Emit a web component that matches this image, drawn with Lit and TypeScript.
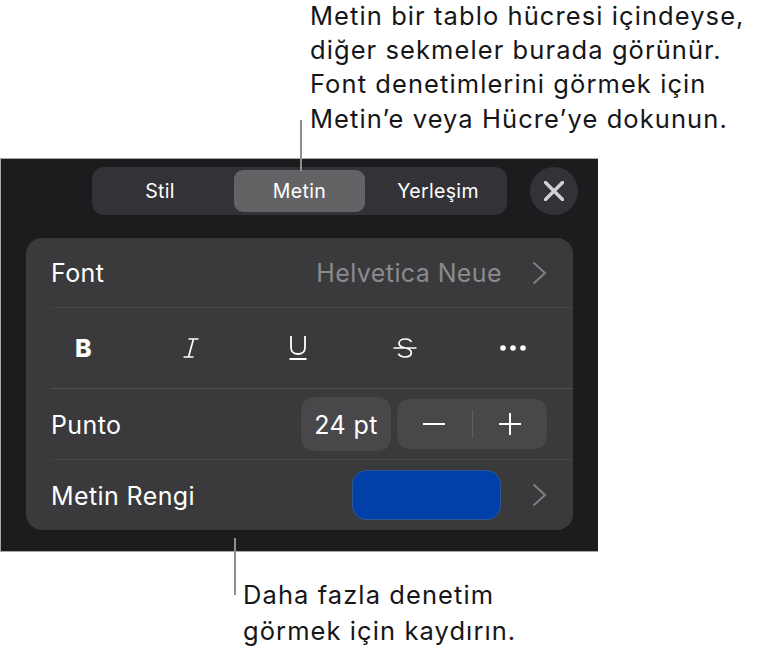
import { LitElement, html, css } from "lit";
import { customElement } from "lit/decorators.js";

const chevron = html`<svg class="chev" width="16" height="24" viewBox="0 0 16 24"><path d="M2.5 1.500 14 12 2.500 22.500" fill="none" stroke="#7f7f84" stroke-width="2"/></svg>`;

@customElement("app-root")
export class AppRoot extends LitElement {
  static styles = css`
    :host { display: block; width: 758px; height: 654px; background: #fff; position: relative; overflow: hidden;
      font-family: Inter, "Liberation Sans", sans-serif; color: #fff; }
    .note { color: #161618; font-size: 25.500px; letter-spacing: 1.080px; line-height: 34.700px; white-space: nowrap; }
    .top { height: 158px; box-sizing: border-box; padding: 0 0 0 310px; }
    .top .first-line { line-height: 31px; margin-bottom: 1.700px; }
    .panel { width: 598px; height: 394px; box-sizing: border-box; background: #1c1c1e; border: 1px solid #a8a8aa; border-right: none;
      padding: 8px 0 0 25px; display: flex; flex-direction: column; }
    .head { display: flex; align-items: center; margin-bottom: 23px; height: 48px; padding-left: 66px; gap: 23px; }
    .seg { flex: none; width: 415px; height: 48px; box-sizing: border-box; background: #333337; border-radius: 12px; display: grid; grid-template-columns: 139px 131px 139px; padding: 3px; align-items: stretch; font-size: 19.500px; font-weight: 400; letter-spacing: .35px; }
    .seg div { display: flex; align-items: center; justify-content: center; border-radius: 9px; }
    .seg .first { padding-right: 9px; }
    .seg .last { padding-left: 7px; }
    .seg .on { background: #636366; }
    .close { flex: none; width: 48px; height: 48px; border-radius: 50%; background: #333337; display: flex; align-items: center; justify-content: center; }
    .card { width: 547px; height: 292px; background: #3a3a3c; border-radius: 16px; display: flex; flex-direction: column; padding-left: 25px; box-sizing: border-box; font-size: 25px; letter-spacing: .4px; }
    .row { display: flex; align-items: center; border-bottom: 1px solid #454548; box-sizing: border-box; padding-right: 26px; }
    .row:last-child { border-bottom: none; }
    .r1 { height: 70px; }
    .r2 { height: 81px; padding-right: 0; border-bottom-color: #515154; }
    .r3 { height: 71px; }
    .r4 { height: 70px; }
    .lbl { margin-top: 2px; }
    .grow { flex: 1; }
    .val { color: #8a8a8f; margin-right: 29px; }
    .chev { display: block; }
    .tools { display: grid; grid-template-columns: repeat(5, 107.4px); margin-left: -21.500px; justify-items: center; align-items: center; }
    .tools svg { display: block; }
    .bold { font-weight: 800; font-size: 25px; letter-spacing: 0; line-height: 1; }
    .pt { width: 90px; height: 54px; box-sizing: border-box; padding-top: 2px; border-radius: 13px; background: #48484a; display: flex; align-items: center; justify-content: center; margin-right: 6px; }
    .step { width: 150px; height: 50px; border-radius: 13px; background: #48484a; display: grid; grid-template-columns: 1fr 1px 1fr; align-items: center; justify-items: center; }
    .step i { display: block; width: 1px; height: 28px; background: #5e5e61; }
    .swatch { width: 149px; height: 50px; box-sizing: border-box; border-radius: 14px; background: #0040a8; border: 1px solid #30578f; margin-right: 30px; }
    .bottom { padding: 25px 0 0 243px; line-height: 35.500px; }
    .line { position: absolute; width: 2px; background: #8e8e90; }
    .l1 { left: 300px; top: 120px; height: 51px; }
    .l2 { left: 234px; top: 538px; height: 57px; }
  `;

  render() {
    return html`
      <div class="top note">
        <div class="first-line">Metin bir tablo hücresi içindeyse,</div>
        <div>diğer sekmeler burada görünür.</div>
        <div>Font denetimlerini görmek için</div>
        <div>Metin’e veya Hücre’ye dokunun.</div>
      </div>
      <div class="panel">
        <div class="head">
          <div class="seg"><div class="first">Stil</div><div class="on">Metin</div><div class="last">Yerleşim</div></div>
          <div class="close"><svg width="20" height="20" viewBox="0 0 20 20"><path d="M1.500 1.500 18.500 18.500M18.500 1.500 1.500 18.500" stroke="#d2d2d6" stroke-width="3.400" stroke-linecap="round" fill="none"/></svg></div>
        </div>
        <div class="card">
          <div class="row r1"><span>Font</span><span class="grow"></span><span class="val">Helvetica Neue</span>${chevron}</div>
          <div class="row r2">
            <div class="tools">
              <span class="bold">B</span>
              <svg width="16" height="20" viewBox="0 0 16 20"><path d="M5.500 1h10M.5 19h10M10.500 1 5.500 19" stroke="#fff" stroke-width="1.700" fill="none"/></svg>
              <svg width="20" height="26" viewBox="0 0 20 26"><path d="M3 1v11.500c0 4 3 6.500 7 6.500s7-2.500 7-6.500V1M1.500 24h17" stroke="#fff" stroke-width="1.800" fill="none"/></svg>
              <svg width="24" height="20" viewBox="0 0 24 20"><path d="M18.500 4C17.500 2 15 1 12.200 1 9 1 6 2.500 6 5.400c0 2.600 2.500 3.600 6 4.400 3.500.9 6.300 2 6.300 4.800 0 3-3 4.400-6.300 4.400-3.200 0-5.600-1.200-6.600-3.300M.5 10h23" stroke="#fff" stroke-width="1.700" fill="none"/></svg>
              <svg width="26" height="6" viewBox="0 0 26 6"><circle cx="3" cy="3" r="2.800" fill="#fff"/><circle cx="13" cy="3" r="2.800" fill="#fff"/><circle cx="23" cy="3" r="2.800" fill="#fff"/></svg>
            </div>
          </div>
          <div class="row r3"><span class="lbl">Punto</span><span class="grow"></span><div class="pt">24 pt</div>
            <div class="step">
              <svg width="22" height="22" viewBox="0 0 22 22"><path d="M0 11h22" stroke="#fff" stroke-width="2"/></svg>
              <i></i>
              <svg width="22" height="22" viewBox="0 0 22 22"><path d="M0 11h22M11 0v22" stroke="#fff" stroke-width="2"/></svg>
            </div>
          </div>
          <div class="row r4"><span class="lbl">Metin Rengi</span><span class="grow"></span><div class="swatch"></div>${chevron}</div>
        </div>
      </div>
      <div class="bottom note">Daha fazla denetim<br />görmek için kaydırın.</div>
      <div class="line l1"></div>
      <div class="line l2"></div>
    `;
  }
}
